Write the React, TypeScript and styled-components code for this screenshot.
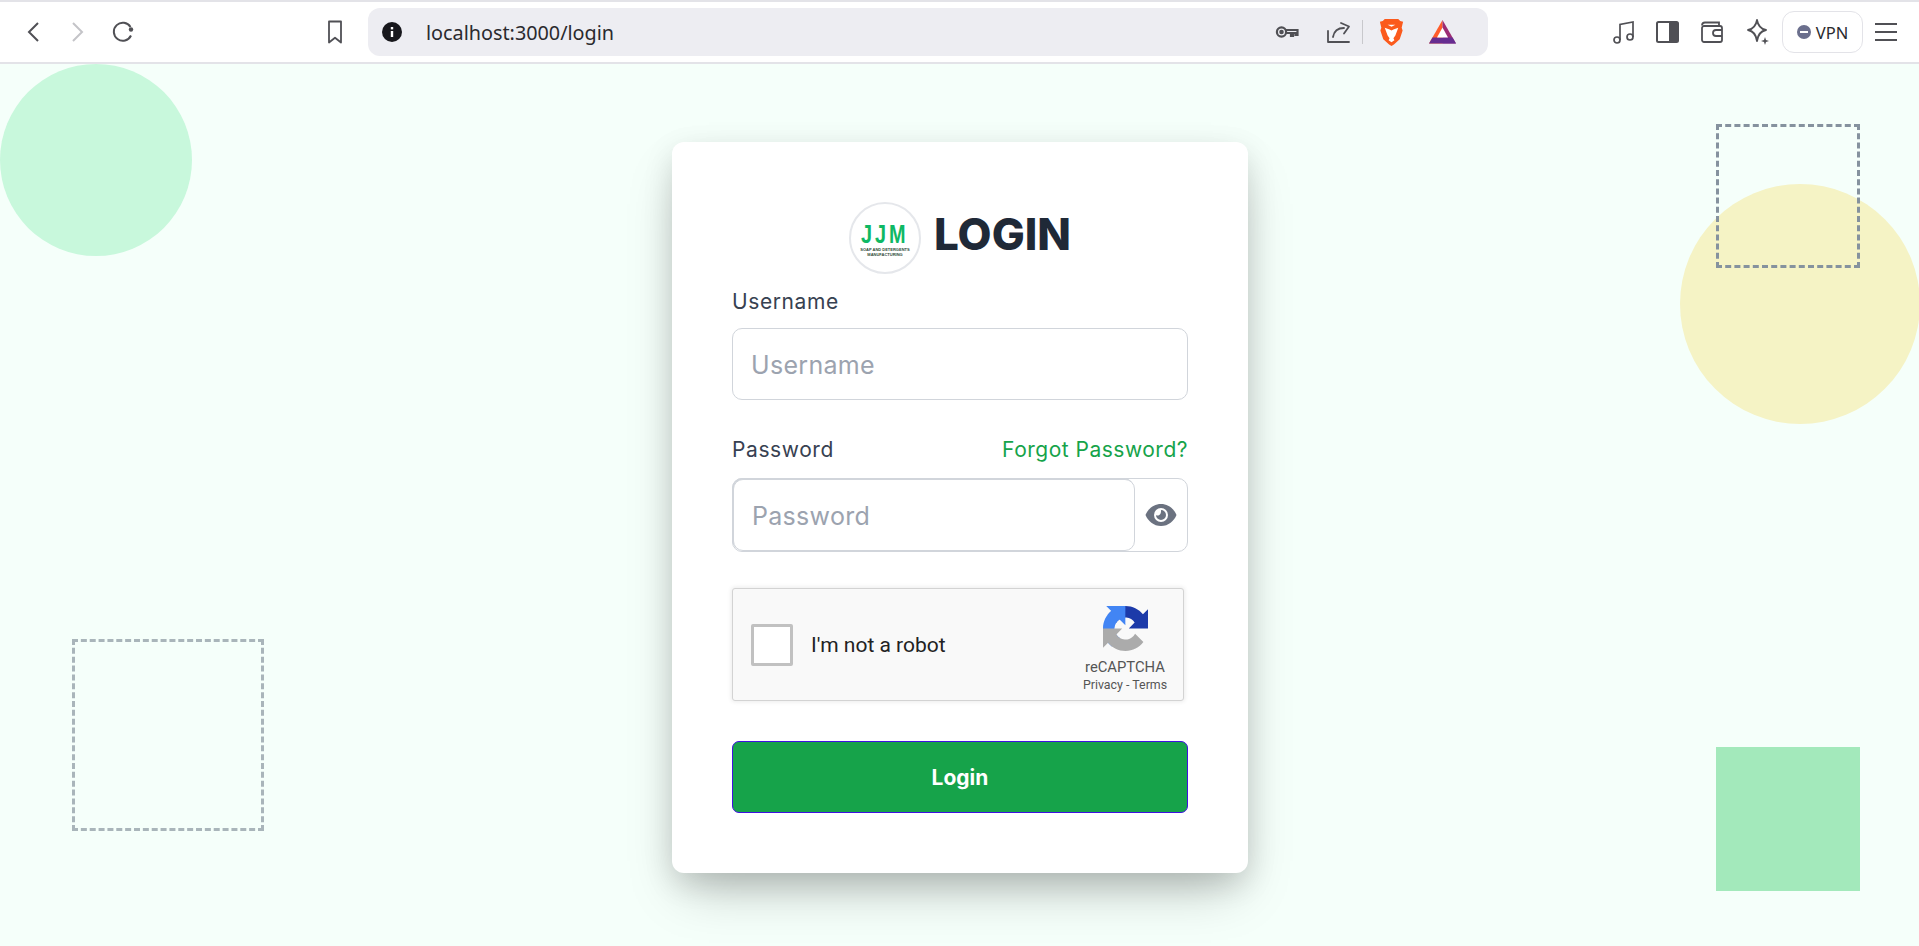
import React from "react";
import styled, { createGlobalStyle } from "styled-components";

const Global = createGlobalStyle`
  html, body { margin: 0; padding: 0; height: 100%; overflow: hidden; background: #f5fffa; }
  * { box-sizing: border-box; }
`;
const Page = styled.div`
  width: 1919px; height: 946px; display: flex; flex-direction: column; overflow: hidden;
  font-family: "Inter", "Liberation Sans", sans-serif;
`;
const Chrome = styled.header`
  height: 64px; flex: none; background: #fff; border-top: 2px solid #e3e3e8; border-bottom: 2px solid #e3e3e8;
  display: flex; align-items: center; padding: 0 0 0 20px; color: #505055;
`;
const IconBtn = styled.span<{ $ml?: number; $faded?: boolean }>`
  display: inline-flex; margin-left: ${p => p.$ml ?? 0}px; color: ${p => (p.$faded ? "#c4c4c8" : "#505055")}; flex: none;
`;
const Omnibox = styled.div`
  width: 1120px; height: 48px; margin-left: 24px; border-radius: 12px; background: #ededf2; display: flex; align-items: center; padding: 0 32px 0 14px; flex: none;
`;
const Url = styled.span`
  margin-left: 24px; font: 400 19.8px "Noto Sans", "Open Sans", sans-serif; color: #2a2a2e; flex: 1;
`;
const Divider = styled.span`
  width: 1px; height: 24px; background: #c8c8cc; margin-left: 10px;
`;
const Vpn = styled.span`
  height: 42px; width: 81px; margin-left: 11px; border: 1.5px solid #e3e3e8; border-radius: 12px; display: flex; align-items: center; justify-content: center; gap: 5px;
  font: 400 16.5px "Noto Sans", sans-serif; color: #2a2a2e; flex: none;
`;
const VpnDot = styled.span`
  width: 14px; height: 14px; border-radius: 50%; background: #6b6f8d; position: relative;
  &::after { content: ""; position: absolute; left: 3px; right: 3px; top: 6px; height: 2px; background: #fff; }
`;
const Stage = styled.main`
  position: relative; flex: 1; background: #f5fffa; display: flex; justify-content: center; padding-top: 78px; overflow: hidden;
`;
const Circle = styled.div<{ $x: number; $y: number; $s: number; $c: string }>`
  position: absolute; left: ${p => p.$x}px; top: ${p => p.$y}px; width: ${p => p.$s}px; height: ${p => p.$s}px; border-radius: 50%; background: ${p => p.$c};
`;
const DashBox = styled.div<{ $x: number; $y: number; $w: number; $h: number; $c: string }>`
  position: absolute; left: ${p => p.$x}px; top: ${p => p.$y}px; width: ${p => p.$w}px; height: ${p => p.$h}px; border: 3px dashed ${p => p.$c};
`;
const Solid = styled.div`
  position: absolute; left: 1716px; top: 683px; width: 144px; height: 144px; background: #a3e9bb;
`;
const Card = styled.section`
  position: relative; width: 576px; height: 731px; background: #fff; border-radius: 12px; padding: 60px;
  box-shadow: 0 25px 50px -12px rgba(0,0,0,.25), 0 10px 30px rgba(0,0,0,.12);
  margin-left: 1px;
`;
const Head = styled.div`
  display: flex; align-items: center; justify-content: center; gap: 13px; height: 72px; margin-bottom: 14px;
`;
const Logo = styled.div`
  width: 72px; height: 72px; border: 2.5px solid #e5e7eb; border-radius: 50%; display: flex; flex-direction: column; align-items: center; justify-content: center; flex: none;
`;
const LogoMark = styled.span`
  display: inline-block; font: 700 26.5px/24px "Liberation Sans", sans-serif; color: #0fb864; letter-spacing: 4px; transform: scaleX(.75); margin: 3px 0 1px;
`;
const LogoSub = styled.span`
  font: 700 4px/5.5px "Liberation Sans", sans-serif; color: #2f4a38; text-align: center; white-space: nowrap;
`;
const Title = styled.h1`
  margin: 0 0 8px; font: 800 44px/1 "Inter", sans-serif; color: #1f2937;
`;
const Row = styled.div`
  display: flex; justify-content: space-between; align-items: center; height: 28px;
`;
const Label = styled.label`
  font: 400 21px/28px "Inter", sans-serif; color: #374151; letter-spacing: .6px;
`;
const Forgot = styled.a`
  font: 400 21px/28px "Inter", sans-serif; color: #16a34a; letter-spacing: .5px;
`;
const TextInput = styled.input`
  display: block; width: 100%; height: 72px; margin-top: 12px; border: 1px solid #d1d5db; border-radius: 10px; padding: 1px 18px 0; outline: none; background: #fff;
  font: 400 25px "Inter", sans-serif; letter-spacing: .3px; color: #374151;
  &::placeholder { color: #9ca3af; opacity: 1; }
`;
const Field = styled.div<{ $mt?: number }>`
  margin-top: ${p => p.$mt ?? 0}px;
`;
const PassGroup = styled.div`
  display: flex; height: 74px; margin-top: 14px; border: 1px solid #d1d5db; border-radius: 10px;
`;
const PassInput = styled.input`
  flex: 1; min-width: 0; height: 72px; border: 1px solid #d1d5db; border-radius: 10px; padding: 1px 18px 0; outline: none; margin: 0;
  font: 400 25px "Inter", sans-serif; letter-spacing: .3px; box-shadow: -1px -1px 0 #d1d5db;
  &::placeholder { color: #9ca3af; opacity: 1; }
`;
const EyeBox = styled.span`
  width: 52px; display: flex; align-items: center; justify-content: center; color: #6b7280; flex: none;
`;
const Captcha = styled.div`
  width: 452px; height: 113px; margin-top: 36px; background: #f9f9f9; border: 1px solid #d3d3d3; border-radius: 3px; box-shadow: 0 0 4px 1px rgba(0,0,0,.08);
  display: flex; align-items: center; padding: 0 15px 0 18px;
`;
const Check = styled.div`
  width: 42px; height: 42px; background: #fff; border: 3px solid #c1c1c1; border-radius: 2px; flex: none;
`;
const CaptchaText = styled.span`
  margin-left: 18px; font: 400 21px Roboto, sans-serif; color: #222; flex: 1;
`;
const Brand = styled.div`
  display: flex; flex-direction: column; align-items: center; width: 86px; margin-top: 9px;
`;
const BrandName = styled.span`
  font: 400 14.8px/16px Roboto, sans-serif; color: #555; margin-top: 8px;
`;
const BrandLinks = styled.span`
  font: 400 12.4px/14px Roboto, sans-serif; color: #555; margin-top: 3px; white-space: nowrap;
`;
const Submit = styled.button`
  display: block; width: 100%; height: 72px; margin-top: 40px; background: #16a34a; border: 1px solid #3f10e0; border-radius: 7px;
  color: #fff; font: 700 21px "Inter", sans-serif;
`;

const Back = () => <svg width="18" height="24" viewBox="0 0 18 24" fill="none" stroke="currentColor" strokeWidth="2"><path d="M14 3 5 12l9 9"/></svg>;
const Forward = () => <svg width="18" height="24" viewBox="0 0 18 24" fill="none" stroke="currentColor" strokeWidth="2"><path d="m4 3 9 9-9 9"/></svg>;
const Reload = () => <svg width="24" height="24" viewBox="0 0 24 24" fill="none" stroke="currentColor" strokeWidth="2"><path d="M20 15.500A9 9 0 1 1 19.500 7"/><circle cx="20" cy="9.500" r="2.200" fill="currentColor" stroke="none"/></svg>;
const Bookmark = () => <svg width="18" height="26" viewBox="0 0 18 26" fill="none" stroke="currentColor" strokeWidth="1.800" strokeLinejoin="round"><path d="M3 2.500h12v21L9 18.800 3 23.500z"/></svg>;
const Info = () => <svg width="20" height="20" viewBox="0 0 20 20"><circle cx="10" cy="10" r="10" fill="#17171c"/><rect x="8.800" y="9" width="2.400" height="6" fill="#fff"/><rect x="8.800" y="5" width="2.400" height="2.400" fill="#fff"/></svg>;
const KeyIcon = () => <svg width="24" height="16" viewBox="0 0 24 16" fill="none" stroke="currentColor" strokeWidth="2.200"><circle cx="6.500" cy="8" r="4.600"/><circle cx="6.500" cy="8" r="1.200" fill="currentColor"/><path d="M11 6h11.500v5h-2V9h-2.500v3h-2V9H11"/></svg>;
const Share = () => <svg width="26" height="26" viewBox="0 0 26 26" fill="none" stroke="currentColor" strokeWidth="1.800" strokeLinejoin="round" strokeLinecap="round"><path d="M2 12v11h21"/><path d="M7 18c1-6 5-9 11-9"/><path d="M15 4l8 3.500-5 7"/></svg>;
const BraveLion = () => <svg width="25" height="29" viewBox="0 0 24 30"><path d="M5 1h14l2 2 3 1-1.500 6 1 3-3 9-6 5.500L12 29l-2.500-1.500L3.500 22l-3-9 1-3L0 4l3-1z" fill="#fb5a1d"/><path d="M5 10l5 2 2 1 2-1 5-2-3 8-2 3 1 2-3 2-3-2 1-2-2-3z" fill="#fff"/><path d="M8 7h8l-4 2z" fill="#fff"/></svg>;
const Bat = () => <svg width="27" height="24" viewBox="0 0 27 24"><path d="M13.500 0 0 23.500h13.500z" fill="#ff5c2a"/><path d="M13.500 0 27 23.500H13.500z" fill="#9c2c73"/><path d="M0 23.500l3.500-6h20l3.500 6z" fill="#662d91"/><path d="M13.500 7.500 19 17.500H8z" fill="#fff"/></svg>;
const Music = () => <svg width="24" height="26" viewBox="0 0 24 26" fill="none" stroke="currentColor" strokeWidth="1.700"><circle cx="5" cy="21" r="3"/><circle cx="18" cy="18" r="3"/><path d="M8 21V5.500L21 3v15"/></svg>;
const Sidebar = () => <svg width="24" height="24" viewBox="0 0 24 24"><rect x="1" y="2" width="21" height="20" rx="1.500" fill="none" stroke="currentColor" strokeWidth="2"/><rect x="13" y="2" width="9" height="20" fill="currentColor"/></svg>;
const Wallet = () => <svg width="24" height="24" viewBox="0 0 24 24" fill="none" stroke="currentColor" strokeWidth="1.800"><path d="M2 5.500C2 3.500 3 2.500 5 2.500h14v4"/><rect x="2" y="6" width="20" height="16" rx="2"/><path d="M22 10h-6a3 3 0 0 0 0 6h6"/></svg>;
const Spark = () => <svg width="26" height="28" viewBox="0 0 26 28"><path d="M12 2c1 6 4 9 9 10-5 1-8 4-9 11-1-7-4-10-9-11 5-1 8-4 9-10z" fill="none" stroke="currentColor" strokeWidth="1.800" strokeLinejoin="round"/><path d="M20 19l1 3 3 1-3 1-1 3-1-3-3-1 3-1z" fill="currentColor"/></svg>;
const Burger = () => <svg width="24" height="22" viewBox="0 0 24 22" fill="none" stroke="currentColor" strokeWidth="2"><path d="M1 3h22M1 11h22M1 19h22"/></svg>;
const Eye = () => <svg width="32" height="24" viewBox="0 0 32 24"><path d="M16 1C8.500 1 3 6 .5 12 3 18 8.500 23 16 23s13-5 15.500-11C29 6 23.500 1 16 1z" fill="currentColor"/><circle cx="16" cy="12" r="7" fill="#fff"/><path d="M16 7a5 5 0 1 1-5 5c2 1.500 5.500 0 5-5z" fill="currentColor"/></svg>;
const RecaptchaLogo = () => (
  <svg width="45" height="45" viewBox="0 0 64 64">
    <path d="M64 31.955l-.033-1.370V4.687l-7.160 7.160C50.948 4.674 42.033.093 32.050.093c-10.400 0-19.622 4.960-25.458 12.640l11.736 11.860a15.550 15.550 0 0 1 4.754-5.334c2.050-1.600 4.952-2.906 8.968-2.906.485 0 .860.057 1.135.163 4.976.393 9.288 3.140 11.828 7.124l-8.307 8.307c10.522-.040 22.400-.063 27.295.007" fill="#1c3aa9"/>
    <path d="M31.862.094l-1.370.033H4.594l7.160 7.160C4.580 13.147 0 22.060 0 32.046c0 10.400 4.960 19.622 12.640 25.458l11.860-11.736a15.550 15.550 0 0 1-5.334-4.754c-1.600-2.050-2.906-4.952-2.906-8.968 0-.485.057-.860.163-1.135.393-4.976 3.140-9.288 7.124-11.828l8.307 8.307c-.040-10.522-.063-22.400.007-27.295" fill="#4285f4"/>
    <path d="M.001 32.045l.033 1.370v25.898l7.160-7.160c5.860 7.173 14.774 11.754 24.760 11.754 10.400 0 19.622-4.960 25.458-12.640L45.677 39.407a15.550 15.550 0 0 1-4.754 5.334c-2.050 1.600-4.952 2.906-8.968 2.906-.485 0-.860-.057-1.135-.163-4.976-.393-9.288-3.140-11.828-7.124l8.307-8.307c-10.522.040-22.400.063-27.295-.007" fill="#ababab"/>
  </svg>
);

export default function App() {
  return (
    <Page>
      <Global />
      <Chrome>
        <IconBtn $ml={4}><Back /></IconBtn>
        <IconBtn $ml={27} $faded><Forward /></IconBtn>
        <IconBtn $ml={24}><Reload /></IconBtn>
        <IconBtn $ml={191}><Bookmark /></IconBtn>
        <Omnibox>
          <Info />
          <Url>localhost:3000/login</Url>
          <IconBtn><KeyIcon /></IconBtn>
          <IconBtn $ml={27}><Share /></IconBtn>
          <Divider />
          <IconBtn $ml={16}><BraveLion /></IconBtn>
          <IconBtn $ml={25}><Bat /></IconBtn>
        </Omnibox>
        <IconBtn $ml={124}><Music /></IconBtn>
        <IconBtn $ml={20}><Sidebar /></IconBtn>
        <IconBtn $ml={20}><Wallet /></IconBtn>
        <IconBtn $ml={21}><Spark /></IconBtn>
        <Vpn><VpnDot />VPN</Vpn>
        <IconBtn $ml={11}><Burger /></IconBtn>
      </Chrome>
      <Stage>
        <Circle $x={0} $y={0} $s={192} $c="#c8f8dc" />
        <Circle $x={1680} $y={120} $s={240} $c="#f5f3c5" />
        <DashBox $x={1716} $y={60} $w={144} $h={144} $c="#85929e" />
        <DashBox $x={72} $y={575} $w={192} $h={192} $c="#a9b5ba" />
        <Solid />
        <Card>
          <Head>
            <Logo>
              <LogoMark>JJM</LogoMark>
              <LogoSub>SOAP AND DETERGENTS</LogoSub>
              <LogoSub>MANUFACTURING</LogoSub>
            </Logo>
            <Title>LOGIN</Title>
          </Head>
          <Field>
            <Row><Label>Username</Label></Row>
            <TextInput placeholder="Username" />
          </Field>
          <Field $mt={36}>
            <Row><Label>Password</Label><Forgot>Forgot Password?</Forgot></Row>
            <PassGroup>
              <PassInput placeholder="Password" />
              <EyeBox><Eye /></EyeBox>
            </PassGroup>
          </Field>
          <Captcha>
            <Check />
            <CaptchaText>I'm not a robot</CaptchaText>
            <Brand>
              <RecaptchaLogo />
              <BrandName>reCAPTCHA</BrandName>
              <BrandLinks>Privacy - Terms</BrandLinks>
            </Brand>
          </Captcha>
          <Submit>Login</Submit>
        </Card>
      </Stage>
    </Page>
  );
}
